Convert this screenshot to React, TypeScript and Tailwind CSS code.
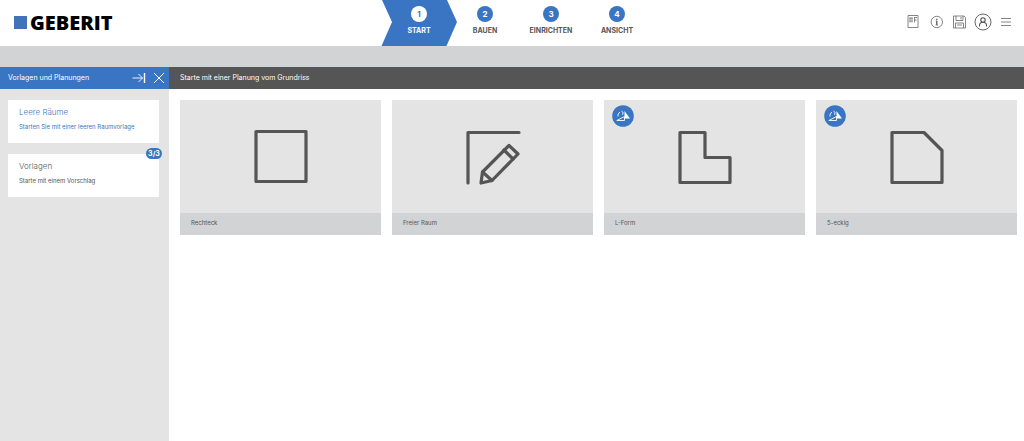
import type { ReactNode } from "react";
import clsx from "clsx";

type Step = {
  number: number;
  label: string;
};

type RoomShape = {
  name: string;
  drawing: ReactNode;
  slopedCeiling?: boolean;
};

const steps: Step[] = [
  { number: 1, label: "START" },
  { number: 2, label: "BAUEN" },
  { number: 3, label: "EINRICHTEN" },
  { number: 4, label: "ANSICHT" },
];

const roomShapes: RoomShape[] = [
  {
    name: "Rechteck",
    drawing: <path d="M4 3.5h50v50H4z" />,
  },
  {
    name: "Freier Raum",
    drawing: (
      <>
        <path d="M4 55V4.500h51" />
        <path d="M17 55l1.500-11L45 17.500l9 8.500L28 52.500z" />
        <path d="M18.500 44l9.500 8.500M40 22l9 9" />
      </>
    ),
  },
  {
    name: "L-Form",
    drawing: <path d="M4 4.500h25v25h25v25H4z" />,
    slopedCeiling: true,
  },
  {
    name: "5-eckig",
    drawing: <path d="M4 4.500h32l18 18v32H4z" />,
    slopedCeiling: true,
  },
];

function Logo() {
  return (
    <a href="#" className="flex items-center gap-[3px]">
      <span className="size-[13px] bg-[#4273b9]" />
      <span className="font-['Open_Sans',sans-serif] text-[20px] leading-5 font-extrabold text-black">GEBERIT</span>
    </a>
  );
}

function StepButton({ step, active }: { step: Step; active: boolean }) {
  return (
    <button
      type="button"
      aria-current={active ? "step" : undefined}
      className={clsx(
        "relative flex h-[46px] w-[66px] flex-col items-center pt-[6px]",
        active ? "text-white" : "text-[#555]"
      )}
    >
      {active && (
        <svg className="absolute top-0 -left-[5px] h-[46px] w-[76px]" viewBox="0 0 76 46" fill="#3a75c4">
          <path d="M1 0h65l10 22-10.500 24H.5L11 22z" />
        </svg>
      )}
      <span
        className={clsx(
          "relative flex size-4 items-center justify-center rounded-full text-[8px] font-bold",
          active ? "bg-white text-[#3a75c4]" : "bg-[#3a75c4] text-white"
        )}
      >
        {step.number}
      </span>
      <span className="relative mt-[3px] text-[7px] leading-[11px] font-bold">{step.label}</span>
    </button>
  );
}

function IconButton({ label, children }: { label: string; children: ReactNode }) {
  return (
    <button type="button" aria-label={label} className="flex size-5 items-center justify-center">
      <svg className="size-5" viewBox="0 0 20 20" fill="none" stroke="#777" strokeWidth="0.9">
        {children}
      </svg>
    </button>
  );
}

function Toolbar() {
  return (
    <div className="flex flex-1 items-center justify-end gap-[3px] pr-2 pb-[2px]">
      <IconButton label="Projektliste">
        <path d="M4 3.500h10v12H4z" />
        <path d="M6 5v5.500M8 5v5.500M10.500 5v5.500M10.500 5.500h2.500M10.500 8h2" />
        <path d="M5.500 6.500h3M5.500 9h3" strokeWidth="0.500" />
      </IconButton>
      <IconButton label="Information">
        <circle cx="9.800" cy="10" r="5.700" />
        <path d="M9.800 8.800V13M9.800 6.700v1.200" stroke="#555" strokeWidth="1.300" />
        <path d="M8.700 9h1.100M8.600 13H11" />
      </IconButton>
      <IconButton label="Speichern">
        <path d="M3.500 4h10.500l1.500 1.500V16h-12z" />
        <path d="M6 4v4.500h7V4M11 5v2.500M5.500 16v-5h8v5M7 13h5" />
      </IconButton>
      <IconButton label="Benutzerkonto">
        <circle cx="10" cy="10" r="8" stroke="#555" />
        <circle cx="10" cy="8" r="2.200" stroke="#555" strokeWidth="1.100" />
        <path d="M6.500 14.500v-1c0-2 1.500-3.200 3.500-3.200s3.500 1.200 3.500 3.200v1" stroke="#555" strokeWidth="1.100" />
      </IconButton>
      <IconButton label="Menü">
        <path d="M5 6.500h10M5 10h10M5 13.500h10" />
      </IconButton>
    </div>
  );
}

function TemplateCard({ title, text, badge, active }: { title: string; text: string; badge?: string; active?: boolean }) {
  return (
    <button
      type="button"
      className={clsx(
        "relative flex h-[43px] w-full flex-col rounded-[1px] bg-white px-[11px] pt-[6px] text-left",
        active ? "text-[#3a75c4]" : "text-[#555]"
      )}
    >
      <span className="text-[8px] leading-3 font-light">{title}</span>
      <span className="mt-[4px] text-[6px] leading-[10px] whitespace-nowrap">{text}</span>
      {badge && (
        <span className="absolute -top-[6px] -right-[3px] flex h-[11px] w-4 items-center justify-center rounded-full bg-[#3a75c4] text-[7px] leading-[11px] font-bold text-white">
          {badge}
        </span>
      )}
    </button>
  );
}

function Sidebar() {
  return (
    <aside className="flex w-[169px] shrink-0 flex-col bg-[#e4e4e4]">
      <div className="flex h-[22px] items-center bg-[#3a75c4] pr-1 pl-2 text-white">
        <h2 className="flex-1 text-[7px] leading-3 font-normal whitespace-nowrap">Vorlagen und Planungen</h2>
        <button type="button" aria-label="Anheften" className="mr-[7px]">
          <svg className="h-3 w-[14px]" viewBox="0 0 14 12" fill="none" stroke="currentColor" strokeWidth="0.900">
            <path d="M.5 6h10M6.500 2l4 4-4 4" />
            <path d="M12.500 1v10" strokeWidth="1.400" />
          </svg>
        </button>
        <button type="button" aria-label="Schließen">
          <svg className="size-3" viewBox="0 0 12 12" fill="none" stroke="currentColor" strokeWidth="1">
            <path d="M1 1l10 10M11 1L1 11" />
          </svg>
        </button>
      </div>
      <div className="flex flex-col gap-[11px] pt-[11px] pr-[10px] pl-2">
        <TemplateCard title="Leere Räume" text="Starten Sie mit einer leeren Raumvorlage" active />
        <TemplateCard title="Vorlagen" text="Starte mit einem Vorschlag" badge="3/3" />
      </div>
    </aside>
  );
}

function RoomCard({ shape }: { shape: RoomShape }) {
  return (
    <button type="button" className="relative flex flex-col bg-[#e4e4e4] text-left">
      <span className="flex h-[113px] items-center justify-center">
        <svg
          className="size-[58px]"
          viewBox="0 0 58 58"
          fill="none"
          stroke="#555"
          strokeWidth="3.200"
          strokeLinecap="round"
          strokeLinejoin="round"
        >
          {shape.drawing}
        </svg>
      </span>
      <span className="h-[22px] bg-[#d1d3d4] px-[11px] text-[6px] leading-5 text-[#555]">
        {shape.name}
      </span>
      {shape.slopedCeiling && (
        <svg className="absolute top-[5px] left-2 size-[22px]" viewBox="0 0 22 22" fill="none" stroke="#fff">
          <circle cx="11" cy="11" r="10.800" fill="#3a75c4" stroke="none" />
          <path d="M12.500 6l5.500 7.500h-5.500z" fill="#fff" stroke="none" />
          <path d="M4.800 15.500h7.700v-4z" strokeWidth="0.900" />
          <path d="M6 11.500c-.2-2 .3-3.500 2-4.300M9.500 6.200l1.700 1.300-.7 2.200" strokeWidth="0.900" />
        </svg>
      )}
    </button>
  );
}

export default function App() {
  return (
    <div className="flex min-h-screen flex-col bg-white font-[Inter,sans-serif]">
      <header className="flex h-[46px]">
        <div className="flex flex-1 items-center pb-px pl-[14px]">
          <Logo />
        </div>
        <nav className="ml-[6px] flex">
          {steps.map((step) => (
            <StepButton key={step.number} step={step} active={step.number === 1} />
          ))}
        </nav>
        <Toolbar />
      </header>
      <div className="h-[21px] bg-[#d1d3d4]" />
      <div className="flex flex-1">
        <Sidebar />
        <main className="flex-1">
          <h1 className="flex h-[22px] items-center bg-[#555] px-[11px] text-[7px] leading-3 font-normal text-white">
            Starte mit einer Planung vom Grundriss
          </h1>
          <div className="grid grid-cols-4 gap-[11px] pt-[11px] pr-[7px] pl-[11px]">
            {roomShapes.map((shape) => (
              <RoomCard key={shape.name} shape={shape} />
            ))}
          </div>
        </main>
      </div>
    </div>
  );
}
